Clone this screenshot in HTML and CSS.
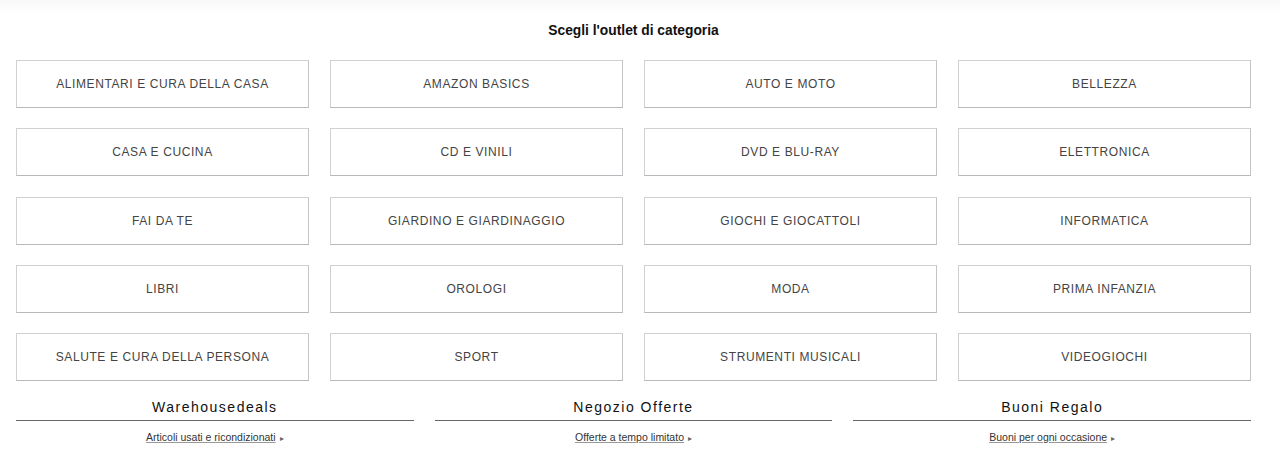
FILE: index.html
```html
<!DOCTYPE html>
<html lang="it">
<head>
    <meta charset="UTF-8">
    <title>Outlet</title>
    <link rel="stylesheet" href="styles.css">
</head>
<body>
    <div class="top-fade"></div>
    <div class="outlet">
        <h2 class="outlet-title">Scegli l'outlet di categoria</h2>
        <div class="cat-grid">
            <a class="cat-box" href="#">Alimentari e cura della casa</a>
            <a class="cat-box" href="#">Amazon Basics</a>
            <a class="cat-box" href="#">Auto e Moto</a>
            <a class="cat-box" href="#">Bellezza</a>
            <a class="cat-box" href="#">Casa e cucina</a>
            <a class="cat-box" href="#">CD e Vinili</a>
            <a class="cat-box" href="#">DVD e Blu-ray</a>
            <a class="cat-box" href="#">Elettronica</a>
            <a class="cat-box" href="#">Fai da te</a>
            <a class="cat-box" href="#">Giardino e giardinaggio</a>
            <a class="cat-box" href="#">Giochi e giocattoli</a>
            <a class="cat-box" href="#">Informatica</a>
            <a class="cat-box" href="#">Libri</a>
            <a class="cat-box" href="#">Orologi</a>
            <a class="cat-box" href="#">Moda</a>
            <a class="cat-box" href="#">Prima infanzia</a>
            <a class="cat-box" href="#">Salute e cura della persona</a>
            <a class="cat-box" href="#">Sport</a>
            <a class="cat-box" href="#">Strumenti musicali</a>
            <a class="cat-box" href="#">Videogiochi</a>
        </div>

        <div class="more-row">
            <div class="more-col">
                <h3 class="more-head">Warehousedeals</h3>
                <a class="more-link" href="#">Articoli usati e ricondizionati</a><span class="arrow">&#9656;</span>
            </div>
            <div class="more-col">
                <h3 class="more-head">Negozio Offerte</h3>
                <a class="more-link" href="#">Offerte a tempo limitato</a><span class="arrow">&#9656;</span>
            </div>
            <div class="more-col">
                <h3 class="more-head">Buoni Regalo</h3>
                <a class="more-link" href="#">Buoni per ogni occasione</a><span class="arrow">&#9656;</span>
            </div>
        </div>
    </div>
</body>
</html>
```

FILE: styles.css
```css
body {
    margin: 0;
    background: #fff;
    font-family: "Liberation Sans", Arial, sans-serif;
    color: #333;
}

.top-fade {
    height: 14px;
    background: linear-gradient(#f8f8f8, #fff);
}

.outlet {
    width: 1235px;
    margin-left: 16px;
}

.outlet-title {
    margin: 9px 0 21px;
    text-align: center;
    font-size: 13.8px;
    font-weight: bold;
    color: #111;
    line-height: 16px;
}

.cat-grid {
    display: grid;
    grid-template-columns: repeat(4, 293px);
    column-gap: 21px;
    row-gap: 20.25px;
}

.cat-box {
    display: flex;
    align-items: center;
    justify-content: center;
    height: 48px;
    box-sizing: border-box;
    border: 1px solid #d0d0d3;
    border-bottom-color: #b8b8bc;
    border-right-color: #c4c4c8;
    text-transform: uppercase;
    text-decoration: none;
    font-size: 12px;
    letter-spacing: 0.6px;
    color: #444;
}

.more-row {
    display: flex;
    gap: 21px;
    margin-top: 18px;
}

.more-col {
    flex: 1;
    text-align: center;
}

.more-head {
    margin: 0;
    padding-bottom: 5px;
    border-bottom: 1px solid #666;
    font-size: 14px;
    font-weight: normal;
    letter-spacing: 1.5px;
    color: #111;
    line-height: 16px;
}

.more-link {
    display: inline-block;
    margin-top: 10px;
    font-size: 10.5px;
    color: #333;
    text-decoration: underline;
    text-decoration-color: #999;
}

.arrow {
    font-size: 8px;
    color: #666;
    margin-left: 4px;
}
```
